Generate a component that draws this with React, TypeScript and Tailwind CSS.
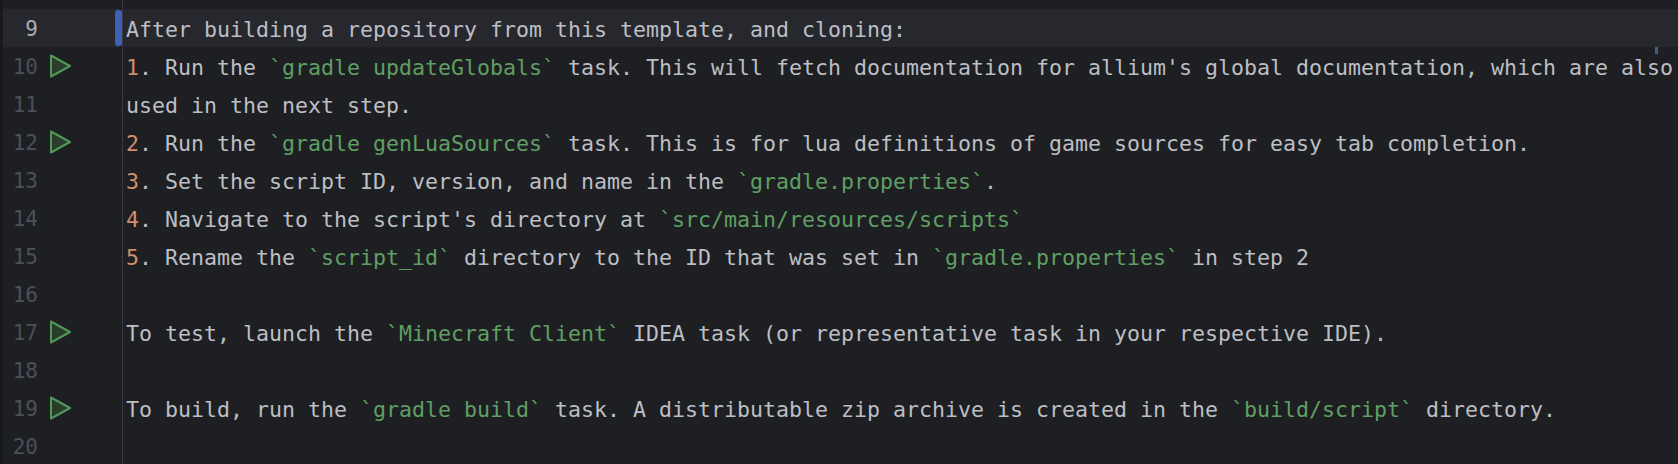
const MONO = "font-['DejaVu_Sans_Mono',monospace]";

type Seg = { t: string; c?: "num" | "code" };
type Row = { n: number; run?: boolean; active?: boolean; segs: Seg[] };

const rows: Row[] = [
  { n: 9, active: true, segs: [{ t: "After building a repository from this template, and cloning:" }] },
  {
    n: 10,
    run: true,
    segs: [
      { t: "1", c: "num" },
      { t: ". Run the " },
      { t: "`gradle updateGlobals`", c: "code" },
      { t: " task. This will fetch documentation for allium's global documentation, which are also" },
    ],
  },
  { n: 11, segs: [{ t: "used in the next step." }] },
  {
    n: 12,
    run: true,
    segs: [
      { t: "2", c: "num" },
      { t: ". Run the " },
      { t: "`gradle genLuaSources`", c: "code" },
      { t: " task. This is for lua definitions of game sources for easy tab completion." },
    ],
  },
  {
    n: 13,
    segs: [
      { t: "3", c: "num" },
      { t: ". Set the script ID, version, and name in the " },
      { t: "`gradle.properties`", c: "code" },
      { t: "." },
    ],
  },
  {
    n: 14,
    segs: [
      { t: "4", c: "num" },
      { t: ". Navigate to the script's directory at " },
      { t: "`src/main/resources/scripts`", c: "code" },
    ],
  },
  {
    n: 15,
    segs: [
      { t: "5", c: "num" },
      { t: ". Rename the " },
      { t: "`script_id`", c: "code" },
      { t: " directory to the ID that was set in " },
      { t: "`gradle.properties`", c: "code" },
      { t: " in step 2" },
    ],
  },
  { n: 16, segs: [] },
  {
    n: 17,
    run: true,
    segs: [
      { t: "To test, launch the " },
      { t: "`Minecraft Client`", c: "code" },
      { t: " IDEA task (or representative task in your respective IDE)." },
    ],
  },
  { n: 18, segs: [] },
  {
    n: 19,
    run: true,
    segs: [
      { t: "To build, run the " },
      { t: "`gradle build`", c: "code" },
      { t: " task. A distributable zip archive is created in the " },
      { t: "`build/script`", c: "code" },
      { t: " directory." },
    ],
  },
  { n: 20, segs: [] },
];

function RunIcon() {
  return (
    <svg width="22" height="24" viewBox="0 0 22 24" className="shrink-0">
      <path
        d="M2 1.5 L21 12 L2 22.5 Z"
        fill="#2a3d2b"
        stroke="#50985a"
        strokeWidth="2"
        strokeLinejoin="round"
      />
    </svg>
  );
}

function segClass(c?: Seg["c"]) {
  if (c === "num") return "text-[#cf8e6d]";
  if (c === "code") return "text-[#5f9f63]";
  return "";
}

function EditorRow({ row }: { row: Row }) {
  return (
    <div className={`flex h-[38px] items-center ${row.active ? "bg-[#26282e]" : ""}`}>
      <div
        className={`w-[38px] shrink-0 pt-[4px] text-right text-[21px] ${
          row.active ? "text-[#a8abb0]" : "text-[#4b5059]"
        }`}
      >
        {row.n}
      </div>
      <div className="ml-[11px] w-[22px] shrink-0">{row.run ? <RunIcon /> : null}</div>
      <div className="relative ml-[44px] h-full w-[8px] shrink-0 border-r border-[#393b40]">
        {row.active ? (
          <div className="absolute left-[0px] top-[1px] h-[36px] w-[7px] rounded-[3px] bg-[#3d62b4]" />
        ) : null}
      </div>
      <div className="ml-[3px] whitespace-pre pt-[4px] text-[21.6px] text-[#bcbec4]">
        {row.segs.map((s, i) => (
          <span key={i} className={segClass(s.c)}>
            {s.t}
          </span>
        ))}
      </div>
    </div>
  );
}

export default function App() {
  return (
    <div className={`relative h-[464px] w-[1678px] overflow-hidden bg-[#1e1f22] ${MONO}`}>
      <div className="flex h-[9px]">
        <div className="ml-[122px] h-full w-px bg-[#393b40]" />
      </div>
      {rows.map((row) => (
        <EditorRow key={row.n} row={row} />
      ))}
      {/* window edge and scrollbar stripe mark */}
      <div className="absolute inset-y-0 left-0 w-[3px] bg-[#18191b]" />
      <div className="absolute left-[1655px] top-[47px] h-[7px] w-[3px] bg-[#3d6185]" />
    </div>
  );
}
